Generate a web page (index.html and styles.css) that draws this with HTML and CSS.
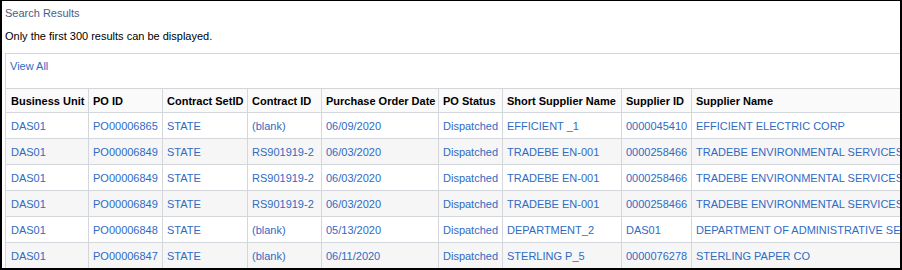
FILE: index.html
```html
<!DOCTYPE html>
<html>
<head>
<meta charset="utf-8">
<link rel="stylesheet" href="styles.css">
</head>
<body>
<div class="frame">
  <div class="content">
    <div class="title">Search Results</div>
    <div class="note">Only the first 300 results can be displayed.</div>
    <div class="grid">
      <div class="grid-head"><a class="link" href="#">View All</a></div>
      <table class="results">
        <colgroup>
          <col class="c1"><col class="c2"><col class="c3"><col class="c4"><col class="c5"><col class="c6"><col class="c7"><col class="c8"><col class="c9">
        </colgroup>
        <thead>
          <tr>
            <th>Business Unit</th><th>PO ID</th><th>Contract SetID</th><th>Contract ID</th><th>Purchase Order Date</th><th>PO Status</th><th>Short Supplier Name</th><th>Supplier ID</th><th>Supplier Name</th>
          </tr>
        </thead>
        <tbody>
          <tr>
            <td>DAS01</td><td>PO00006865</td><td>STATE</td><td>(blank)</td><td>06/09/2020</td><td>Dispatched</td><td>EFFICIENT _1</td><td>0000045410</td><td>EFFICIENT ELECTRIC CORP</td>
          </tr>
          <tr class="alt">
            <td>DAS01</td><td>PO00006849</td><td>STATE</td><td>RS901919-2</td><td>06/03/2020</td><td>Dispatched</td><td>TRADEBE EN-001</td><td>0000258466</td><td>TRADEBE ENVIRONMENTAL SERVICES</td>
          </tr>
          <tr>
            <td>DAS01</td><td>PO00006849</td><td>STATE</td><td>RS901919-2</td><td>06/03/2020</td><td>Dispatched</td><td>TRADEBE EN-001</td><td>0000258466</td><td>TRADEBE ENVIRONMENTAL SERVICES</td>
          </tr>
          <tr class="alt">
            <td>DAS01</td><td>PO00006849</td><td>STATE</td><td>RS901919-2</td><td>06/03/2020</td><td>Dispatched</td><td>TRADEBE EN-001</td><td>0000258466</td><td>TRADEBE ENVIRONMENTAL SERVICES</td>
          </tr>
          <tr>
            <td>DAS01</td><td>PO00006848</td><td>STATE</td><td>(blank)</td><td>05/13/2020</td><td>Dispatched</td><td>DEPARTMENT_2</td><td>DAS01</td><td>DEPARTMENT OF ADMINISTRATIVE SERVICES</td>
          </tr>
          <tr class="alt">
            <td>DAS01</td><td>PO00006847</td><td>STATE</td><td>(blank)</td><td>06/11/2020</td><td>Dispatched</td><td>STERLING P_5</td><td>0000076278</td><td>STERLING PAPER CO</td>
          </tr>
        </tbody>
      </table>
    </div>
  </div>
</div>
</body>
</html>
```

FILE: styles.css
```css
html, body {
  margin: 0;
  padding: 0;
  background: #ffffff;
}

body {
  font-family: "Liberation Sans", Arial, sans-serif;
  font-size: 11px;
  color: #000000;
}

.frame {
  box-sizing: border-box;
  width: 902px;
  height: 270px;
  border-top: 1px solid #000000;
  border-left: 2px solid #000000;
  border-right: 2px solid #000000;
  border-bottom: 2px solid #000000;
  overflow: hidden;
}

.content {
  padding: 5px 0 0 3px;
}

.title {
  line-height: 14px;
  color: #4b5a8a;
}

.note {
  line-height: 14px;
  margin-top: 9px;
}

.grid {
  margin-top: 10px;
  border-top: 1px solid #d3d6da;
  border-left: 1px solid #d3d6da;
}

.grid-head {
  box-sizing: border-box;
  height: 34px;
  padding: 5px 4px 0;
  line-height: 14px;
}

.link {
  color: #2f6bc4;
  text-decoration: none;
}

.results {
  table-layout: fixed;
  width: 946px;
  border-collapse: separate;
  border-spacing: 0;
}

.c1 { width: 83px; }
.c2 { width: 74px; }
.c3 { width: 85px; }
.c4 { width: 74px; }
.c5 { width: 117px; }
.c6 { width: 64px; }
.c7 { width: 119px; }
.c8 { width: 70px; }
.c9 { width: 260px; }

.results th,
.results td {
  box-sizing: border-box;
  padding: 0 4px;
  border-right: 1px solid #d3d6da;
  border-bottom: 1px solid #d3d6da;
  white-space: nowrap;
  overflow: hidden;
  text-align: left;
  vertical-align: middle;
  line-height: 14px;
}

.results th:first-child,
.results td:first-child {
  padding-left: 5px;
}

.results th {
  height: 25px;
  border-top: 1px solid #d3d6da;
  font-weight: bold;
  color: #000000;
  background: #fafafa;
}

.results td {
  height: 26px;
  color: #2f6bc4;
  background: #ffffff;
}

.results tr.alt td {
  background: #f6f6f6;
}
```
